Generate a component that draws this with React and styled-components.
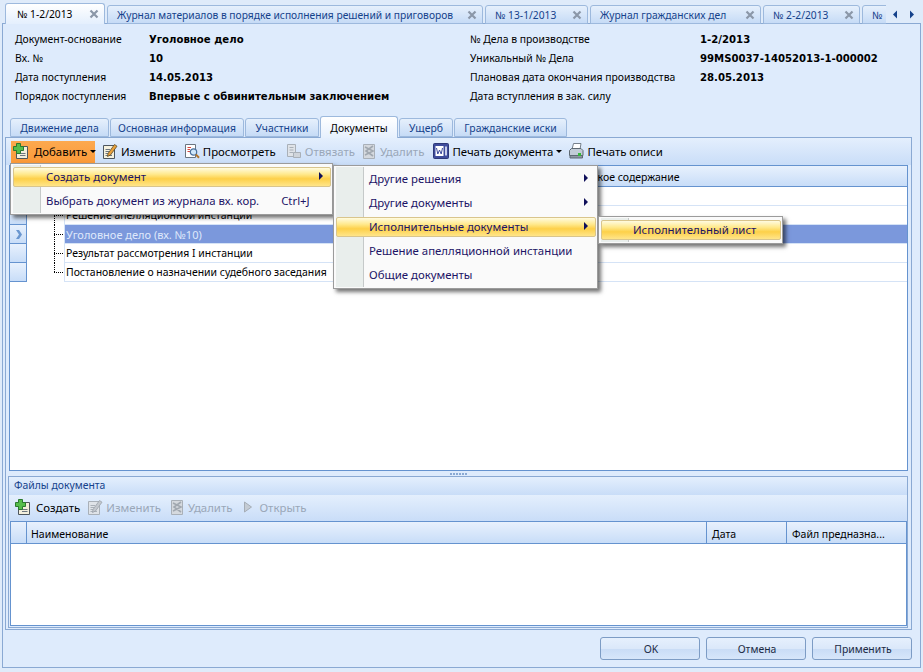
import React from 'react'
import styled, { createGlobalStyle } from 'styled-components'

const GlobalStyle = createGlobalStyle`
  html, body {
    margin: 0;
    padding: 0;
    background: #dfebfa;
  }
  * { box-sizing: border-box; }
`

const Window = styled.div`
  position: relative;
  width: 923px;
  height: 672px;
  overflow: hidden;
  background: #dfebfa;
  font-family: "Noto Sans", "Liberation Sans", sans-serif;
  font-size: 10.4px;
  color: #000;
`

/* document tabs */
const TopStrip = styled.div`
  display: flex;
  height: 24px;
  padding: 3px 0 0 5px;
  align-items: flex-end;
`

const TopTabsRow = styled.div`
  display: flex;
  flex: 0 0 881px;
  overflow: hidden;
  height: 21px;
  align-items: flex-end;
  gap: 2px;
`

const TopTab = styled.div`
  flex: 0 0 ${p => p.$w}px;
  min-width: 0;
  height: ${p => (p.$active ? 21 : 19)}px;
  display: flex;
  align-items: center;
  padding: 0 5px 0 ${p => (p.$active ? 11 : 9)}px;
  justify-content: space-between;
  white-space: nowrap;
  font-size: 10.25px;
  border: 1px solid #9db9dd;
  border-bottom: ${p => (p.$active ? 'none' : '1px solid #9db9dd')};
  border-radius: 3px 3px 0 0;
  color: ${p => (p.$active ? '#000' : '#15428b')};
  background: ${p => (p.$active
    ? 'linear-gradient(#ffffff, #e4effd)'
    : 'linear-gradient(#e6f0fc, #c6dbf6)')};
  position: relative;
  z-index: ${p => (p.$active ? 2 : 0)};
`

const CloseX = styled.svg`
  width: 10px;
  height: 10px;
  flex: none;
`

const ScrollArrows = styled.div`
  display: flex;
  align-items: center;
  gap: 11px;
  height: 19px;
  margin-left: 6px;
`

const Outer = styled.div`
  margin: -1px 2px 0 2px;
  width: 919px;
  height: 645px;
  border: 1px solid #8aa9d3;
  background: #deebfc;
  padding: 5px 8px 0 2px;
`

/* header info */
const Info = styled.div`
  display: grid;
  grid-template-columns: 134px 321px 230px 1fr;
  grid-auto-rows: 19px;
  padding-left: 10px;
  align-items: center;
  height: 88px;
`

const Label = styled.div`
  white-space: nowrap;
`

const Value = styled.div`
  white-space: nowrap;
  padding-top: 1px;
  font-family: "DejaVu Sans", sans-serif;
  font-weight: 700;
  font-size: 10.15px;
`

/* inner tabs */
const InnerTabs = styled.div`
  display: flex;
  height: 20px;
  padding-left: 5px;
  gap: 1px;
  align-items: flex-end;
  position: relative;
  z-index: 2;
`

const InnerTab = styled.div`
  flex: 0 0 ${p => p.$w}px;
  height: ${p => (p.$active ? 22 : 19)}px;
  margin-bottom: ${p => (p.$active ? -1 : 0)}px;
  display: flex;
  align-items: center;
  justify-content: center;
  white-space: nowrap;
  border: 1px solid #9db9dd;
  border-bottom: ${p => (p.$active ? 'none' : '1px solid #9db9dd')};
  border-radius: 3px 3px 0 0;
  color: ${p => (p.$active ? '#000' : '#15428b')};
  background: ${p => (p.$active
    ? 'linear-gradient(#ffffff, #e6f0fd)'
    : 'linear-gradient(#e6f0fc, #c6dbf6)')};
`

const InnerPanel = styled.div`
  width: 907px;
  height: 493px;
  border: 1px solid #8aa9d3;
  background: #deebfc;
  display: flex;
  flex-direction: column;
  padding: 0 3px 1px 2px;
`

const Toolbar = styled.div`
  display: flex;
  align-items: center;
  flex: none;
  height: 27px;
  margin: 0 -3px 0 -2px;
  padding: 1px 0 0 5px;
  font-size: 11.4px;
  background: linear-gradient(#e4effd, #c9ddf8);
`

const ToolButton = styled.div`
  display: flex;
  align-items: center;
  height: 22px;
  padding: 0 4px 2px ${p => p.$pl ?? 4}px;
  gap: 3px;
  white-space: nowrap;
  color: ${p => (p.$disabled ? '#9aa7b8' : '#000')};
  background: ${p => (p.$hot ? 'linear-gradient(#fca94f, #fb9a39)' : 'transparent')};
  width: ${p => (p.$w ? `${p.$w}px` : 'auto')};
`

const Caret = styled.span`
  width: 0;
  height: 0;
  border-left: 3px solid transparent;
  border-right: 3px solid transparent;
  border-top: 3px solid #000;
  margin-left: 0;
`

/* grids */
const Grid = styled.div`
  height: 306px;
  margin-left: 1px;
  width: 899px;
  flex: none;
  border: 1px solid #6593cf;
  background: #fff;
`

const GridHead = styled.div`
  display: flex;
  height: ${p => p.$h}px;
  background: linear-gradient(#e8f1fd, #c8ddf8);
  border-bottom: 1px solid #6593cf;
`

const HeadCell = styled.div`
  flex: ${p => (p.$w ? `0 0 ${p.$w}px` : '1')};
  display: flex;
  align-items: center;
  padding: 2px 0 0 ${p => p.$pl ?? 4}px;
  border-right: ${p => (p.$last ? 'none' : '1px solid #6593cf')};
  white-space: nowrap;
  font-size: 10.5px;
  color: #000;
`

const Row = styled.div`
  display: flex;
  height: 19px;
`

const Indicator = styled.div`
  flex: 0 0 17px;
  display: flex;
  align-items: center;
  justify-content: center;
  border-right: 1px solid #6593cf;
  border-bottom: 1px solid #6593cf;
  background: linear-gradient(#e8f1fd, #c8ddf8);
`

const TreeGuide = styled.div`
  flex: 0 0 37px;
  position: relative;
  &::before {
    content: '';
    position: absolute;
    left: 27px;
    top: ${p => (p.$first ? 8 : -1)}px;
    height: ${p => (p.$first ? 11 : p.$last ? 10 : 20)}px;
    border-left: 1px dotted #000;
  }
  &::after {
    content: '';
    position: absolute;
    left: 27px;
    top: 9px;
    width: 9px;
    border-top: 1px dotted #000;
  }
`

const RowText = styled.div`
  flex: 1;
  display: flex;
  align-items: center;
  padding-left: 1px;
  white-space: nowrap;
  font-size: ${p => (p.$selected ? 11 : 10.45)}px;
  border-left: 1px solid #d5e3f6;
  border-bottom: 1px solid #d5e3f6;
  color: ${p => (p.$selected ? '#dfe8fb' : '#000')};
  background: ${p => (p.$selected ? '#7b98dc' : '#fff')};
`

const Splitter = styled.div`
  height: 5px;
  flex: none;
  display: flex;
  align-items: center;
  justify-content: center;
  gap: 1px;
  i {
    width: 2px;
    height: 2px;
    background: #8aa9d3;
  }
`

const FilesPanel = styled.div`
  flex: 1;
  width: 900px;
  border: 1px solid #8aa9d3;
  display: flex;
  flex-direction: column;
`

const FilesTitle = styled.div`
  height: 18px;
  flex: none;
  display: flex;
  align-items: center;
  padding: 0 0 2px 5px;
  color: #15428b;
  background: linear-gradient(#e4effd, #c9ddf8);
`

const FilesBar = styled.div`
  height: 26px;
  flex: none;
  display: flex;
  align-items: center;
  padding-left: 2px;
  font-size: 11.4px;
  background: linear-gradient(#e4effd, #c9ddf8);
`

const FilesGrid = styled.div`
  flex: 1;
  margin: 0 0 1px 1px;
  width: 897px;
  border: 1px solid #6593cf;
  background: #fff;
`

/* footer */
const Footer = styled.div`
  display: flex;
  justify-content: flex-end;
  gap: 6px;
  margin-top: 7px;
`

const DialogButton = styled.div`
  width: 100px;
  height: 23px;
  display: flex;
  align-items: center;
  justify-content: center;
  border: 1px solid #7d9cc5;
  border-radius: 3px;
  padding-left: 2px;
  font-size: 10.4px;
  color: #1b2a44;
  background: linear-gradient(#e6f0fd 0%, #dbe8fa 50%, #c9dcf6 52%, #d7e6fa 100%);
`

/* popup menus */
const Menu = styled.div`
  position: absolute;
  left: ${p => p.$x}px;
  top: ${p => p.$y}px;
  width: ${p => p.$w}px;
  padding: 3px 1px 3px 2px;
  display: flex;
  flex-direction: column;
  gap: 4px;
  font-size: 11.4px;
  background: #fafafa;
  border: 1px solid #9b9b9b;
  box-shadow: 3px 3px 4px rgba(0, 0, 0, 0.55);
  z-index: ${p => p.$z};
  &::before {
    content: '';
    position: absolute;
    left: 2px;
    top: 1px;
    bottom: 1px;
    width: 27px;
    background: #e9eeec;
    border-right: 1px solid #c5c9c9;
  }
`

const MenuItem = styled.div`
  position: relative;
  display: flex;
  align-items: center;
  height: 20px;
  padding: 0 7px 2px ${p => p.$pl}px;
  color: #1c1466;
  white-space: nowrap;
  border-radius: 2px;
  border: 1px solid ${p => (p.$hot ? '#d9c58c' : 'transparent')};
  background: ${p => (p.$hot
    ? 'linear-gradient(#fffbe0 0%, #ffe98c 35%, #fdd049 60%, #ffe58a 100%)'
    : 'transparent')};
`

const Shortcut = styled.span`
  margin-left: 22px;
`

const SubArrow = styled.span`
  margin-left: auto;
  width: 0;
  height: 0;
  border-top: 4px solid transparent;
  border-bottom: 4px solid transparent;
  border-left: 4px solid #10105a;
`

const Ico = styled.svg`
  width: 16px;
  height: 16px;
  flex: none;
`

const Spaced = styled.span`
  margin-left: 2px;
`

const CloseIcon = () => (
  <CloseX viewBox="0 0 10 10">
    <path d="M1.5 1.5 L8.5 8.5 M8.5 1.5 L1.5 8.5" stroke="#8b97a8" strokeWidth="2.2" fill="none" />
  </CloseX>
)

const Page = ({ off }) => (
  <>
    <path d="M1.5 2.5 H12.5 V15.5 H1.5 Z" fill={off ? '#dfe3e8' : '#f6f2df'} stroke={off ? '#a9b0b8' : '#4c5660'} />
    <path d="M3.5 6.5 H8 M3.5 8.5 H7 M3.5 10.5 H8 M3.5 12.5 H10" stroke={off ? '#a9b0b8' : '#6c7680'} />
  </>
)

const AddIcon = () => (
  <Ico viewBox="0 0 16 16">
    <path d="M3.5 3.5 H14.5 V15.5 H3.5 Z" fill="#f3efdc" stroke="#4e565c" />
    <path d="M7 10.5 H12.5 M7 12.5 H12.5" stroke="#6c7680" />
    <path d="M3.5 0.5 H7.5 V3.5 H10.5 V7.5 H7.5 V10.5 H3.5 V7.5 H0.5 V3.5 H3.5 Z" fill="#55bd4b" stroke="#2b7a2f" />
  </Ico>
)

const EditIcon = ({ off }) => (
  <Ico viewBox="0 0 16 16">
    <Page off={off} />
    <path d="M6 10.5 L12.5 1.5 L15 3.2 L8.5 12 L5.5 13.5 Z" fill={off ? '#c3c8ce' : '#e9a13b'} stroke={off ? '#9aa1a9' : '#5b4a2a'} strokeWidth="0.8" />
  </Ico>
)

const ViewIcon = () => (
  <Ico viewBox="0 0 16 16">
    <path d="M1.5 1.5 H11.5 V14.5 H1.5 Z" fill="#fff" stroke="#6a7580" />
    <path d="M3.5 4.5 H7 M3.5 6.5 H6 M3.5 8.5 H6" stroke="#d8453c" />
    <circle cx="9.5" cy="9" r="3.2" fill="#cfe7fa" stroke="#4a6f9c" strokeWidth="1.2" />
    <path d="M11.8 11.4 L15 14.8" stroke="#b1742a" strokeWidth="2" />
  </Ico>
)

const UnlinkIcon = () => (
  <Ico viewBox="0 0 16 16">
    <path d="M1.5 1.5 H9.5 V13.5 H1.5 Z" fill="#dfe3e8" stroke="#a9b0b8" />
    <path d="M3.5 4.5 H7.5 M3.5 7 H7.5 M3.5 9.5 H7.5" stroke="#a9b0b8" />
    <path d="M7.5 9.5 H14.5 V14.5 H7.5 Z" fill="#cfd4da" stroke="#a9b0b8" />
  </Ico>
)

const DeleteIcon = () => (
  <Ico viewBox="0 0 16 16">
    <path d="M2.5 1.5 H13.5 V15.5 H2.5 Z" fill="#d5d9de" stroke="#a9b0b8" />
    <path d="M4 4 L12 8 L4 12 M12 3 L5 8 L12 13" stroke="#a1a8b0" strokeWidth="1.6" fill="none" />
  </Ico>
)

const WordIcon = () => (
  <Ico viewBox="0 0 16 16">
    <rect x="0.5" y="0.5" width="15" height="15" rx="1" fill="#3e4c9c" stroke="#2d3878" />
    <rect x="2.5" y="3" width="8" height="10" fill="#fff" />
    <path d="M3.5 5 L4.8 11 L6.5 7 L8.2 11 L9.5 5" stroke="#3e4c9c" strokeWidth="1" fill="none" />
    <path d="M12 3.5 H14 V12.5 H12 Z" fill="#c9cfea" />
  </Ico>
)

const PrinterIcon = () => (
  <Ico viewBox="0 0 16 16">
    <path d="M5.5 0.5 H13 L12 6.5 H4 Z" fill="#fff" stroke="#77818c" />
    <path d="M1.5 7.5 L3.5 5.5 H13 L15 7.5 V12.5 H1.5 Z" fill="#c2ccd6" stroke="#5e6973" />
    <path d="M2 12.5 H14.5 V15 H2 Z" fill="#8d98a3" stroke="#5e6973" />
    <rect x="10" y="10" width="3" height="3" fill="#35b83a" />
  </Ico>
)

const PlayIcon = () => (
  <Ico viewBox="0 0 16 16">
    <path d="M4.5 3 L11.5 8 L4.5 13 Z" fill="#c5ccd4" stroke="#a5adb6" />
  </Ico>
)

const ArrowIcon = ({ dir }) => (
  <svg width="6" height="9" viewBox="0 0 6 9">
    <path d={dir === 'left' ? 'M5 0.5 L1 4.5 L5 8.5 Z' : 'M1 0.5 L5 4.5 L1 8.5 Z'} fill="#15428b" />
  </svg>
)

const Chevron = () => (
  <svg width="7" height="9" viewBox="0 0 7 9">
    <path d="M1 0 L4 0 L7 4.5 L4 9 L1 9 L4 4.5 Z" fill="#6a97d0" />
  </svg>
)

const topTabs = [
  { title: '№ 1-2/2013', w: 100, active: true },
  { title: 'Журнал материалов в порядке исполнения решений и приговоров', w: 376 },
  { title: '№ 13-1/2013', w: 103 },
  { title: 'Журнал гражданских дел', w: 171 },
  { title: '№ 2-2/2013', w: 97 },
  { title: '№', w: 97 }
]

const innerTabs = [
  { title: 'Движение дела', w: 99 },
  { title: 'Основная информация', w: 134 },
  { title: 'Участники', w: 74 },
  { title: 'Документы', w: 78, active: true },
  { title: 'Ущерб', w: 54 },
  { title: 'Гражданские иски', w: 113 }
]

const info = [
  ['Документ-основание', 'Уголовное дело', '№ Дела в производстве', '1-2/2013'],
  ['Вх. №', '10', 'Уникальный № Дела', '99MS0037-14052013-1-000002'],
  ['Дата поступления', '14.05.2013', 'Плановая дата окончания производства', '28.05.2013'],
  ['Порядок поступления', 'Впервые с обвинительным заключением', 'Дата вступления в зак. силу', '']
]

const rows = [
  { title: '', hidden: true },
  { title: 'Решение апелляционной инстанции', first: true },
  { title: 'Уголовное дело (вх. №10)', selected: true },
  { title: 'Результат рассмотрения I инстанции' },
  { title: 'Постановление о назначении судебного заседания', last: true }
]

const App = () => (
  <Window>
    <GlobalStyle />
    <TopStrip>
      <TopTabsRow>
        {topTabs.map(tab => (
          <TopTab key={tab.title} $w={tab.w} $active={tab.active}>
            {tab.title}
            <CloseIcon />
          </TopTab>
        ))}
      </TopTabsRow>
      <ScrollArrows>
        <ArrowIcon dir="left" />
        <ArrowIcon dir="right" />
      </ScrollArrows>
    </TopStrip>

    <Outer>
      <Info>
        {info.map(row => row.map((cell, i) =>
          i % 2 ? <Value key={i + cell}>{cell}</Value> : <Label key={i + cell}>{cell}</Label>
        ))}
      </Info>

      <InnerTabs>
        {innerTabs.map(tab => (
          <InnerTab key={tab.title} $w={tab.w} $active={tab.active}>{tab.title}</InnerTab>
        ))}
      </InnerTabs>

      <InnerPanel>
        <Toolbar>
          <ToolButton $hot $w={84} $pl={2}><AddIcon /><Spaced>Добавить</Spaced><Caret /></ToolButton>
          <ToolButton $pl={7}><EditIcon />Изменить</ToolButton>
          <ToolButton $pl={4}><ViewIcon />Просмотреть</ToolButton>
          <ToolButton $disabled $pl={6}><UnlinkIcon />Отвязать</ToolButton>
          <ToolButton $disabled $pl={2}><DeleteIcon />Удалить</ToolButton>
          <ToolButton $pl={5}><WordIcon />Печать документа<Caret /></ToolButton>
          <ToolButton $pl={2}><PrinterIcon />Печать описи</ToolButton>
        </Toolbar>
        <Grid>
          <GridHead $h={21}>
            <HeadCell $w={17} />
            <HeadCell $w={547} $last />
            <HeadCell $pl={0} $last>Краткое содержание</HeadCell>
          </GridHead>
          {rows.map((row, i) => (
            <Row key={i}>
              <Indicator>{row.selected && <Chevron />}</Indicator>
              {row.hidden ? <TreeGuide $first /> : <TreeGuide $first={false} $last={row.last} />}
              <RowText $selected={row.selected}>{row.title}</RowText>
            </Row>
          ))}
        </Grid>
        <Splitter><i /><i /><i /><i /><i /><i /></Splitter>
        <FilesPanel>
          <FilesTitle>Файлы документа</FilesTitle>
          <FilesBar>
            <ToolButton $pl={4}><AddIcon /><Spaced>Создать</Spaced></ToolButton>
            <ToolButton $disabled $pl={3}><EditIcon off />Изменить</ToolButton>
            <ToolButton $disabled $pl={4}><DeleteIcon />Удалить</ToolButton>
            <ToolButton $disabled $pl={4}><PlayIcon />Открыть</ToolButton>
          </FilesBar>
          <FilesGrid>
            <GridHead $h={22}>
              <HeadCell $w={16} />
              <HeadCell $w={680}>Наименование</HeadCell>
              <HeadCell $w={80} $pl={5}>Дата</HeadCell>
              <HeadCell $last $pl={5}>Файл предназна...</HeadCell>
            </GridHead>
          </FilesGrid>
        </FilesPanel>
      </InnerPanel>

      <Footer>
        <DialogButton>OK</DialogButton>
        <DialogButton>Отмена</DialogButton>
        <DialogButton>Применить</DialogButton>
      </Footer>
    </Outer>

    <Menu $x={10} $y={163} $w={323} $z={10}>
      <MenuItem $hot $pl={32}>Создать документ<SubArrow /></MenuItem>
      <MenuItem $pl={32}>Выбрать документ из журнала вх. кор.<Shortcut>Ctrl+J</Shortcut></MenuItem>
    </Menu>

    <Menu $x={333} $y={165} $w={265} $z={11}>
      <MenuItem $pl={32}>Другие решения<SubArrow /></MenuItem>
      <MenuItem $pl={32}>Другие документы<SubArrow /></MenuItem>
      <MenuItem $hot $pl={32}>Исполнительные документы<SubArrow /></MenuItem>
      <MenuItem $pl={32}>Решение апелляционной инстанции</MenuItem>
      <MenuItem $pl={32}>Общие документы</MenuItem>
    </Menu>

    <Menu $x={598} $y={216} $w={185} $z={12}>
      <MenuItem $hot $pl={31}>Исполнительный лист</MenuItem>
    </Menu>
  </Window>
)

export default App
